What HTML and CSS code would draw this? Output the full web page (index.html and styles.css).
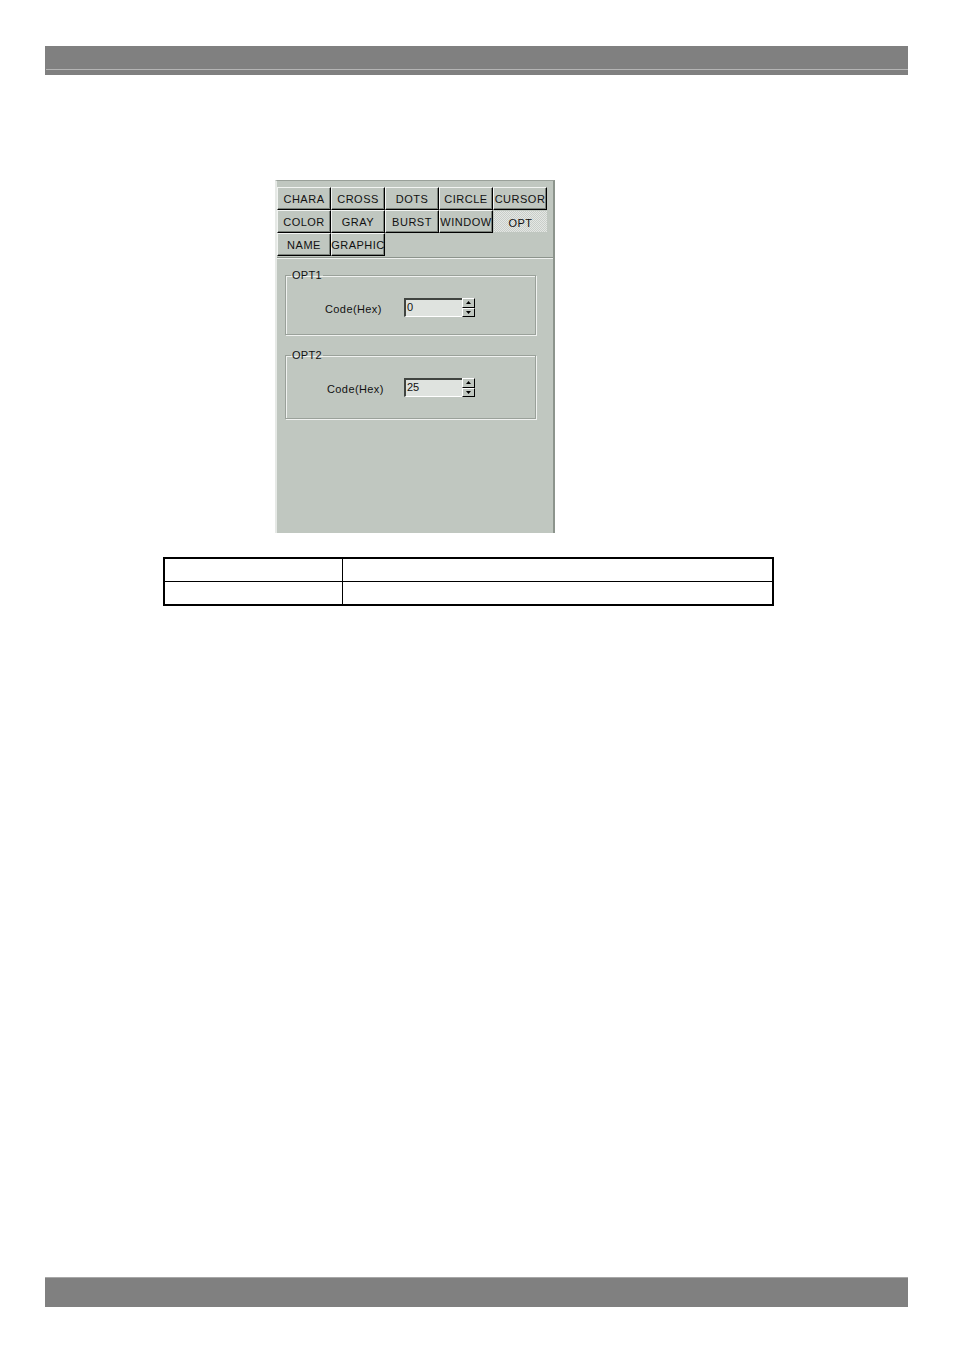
FILE: index.html
```html
<!DOCTYPE html>
<html>
<head>
<meta charset="utf-8">
<link rel="stylesheet" href="styles.css">
</head>
<body>
<div class="topbar"><div class="topline"></div></div>

<div class="panel">
  <div class="tabs">
    <div class="tab">CHARA</div>
    <div class="tab">CROSS</div>
    <div class="tab">DOTS</div>
    <div class="tab">CIRCLE</div>
    <div class="tab">CURSOR</div>
    <div class="tab">COLOR</div>
    <div class="tab">GRAY</div>
    <div class="tab">BURST</div>
    <div class="tab">WINDOW</div>
    <div class="tab active">OPT</div>
    <div class="tab">NAME</div>
    <div class="tab">GRAPHIC</div>
  </div>
  <div class="sep"></div>

  <fieldset class="group g1">
    <legend>OPT1</legend>
    <div class="row">
      <span class="lbl">Code(Hex)</span>
      <div class="spin">
        <div class="field">0</div>
        <div class="btns">
          <div class="sb"><svg width="5" height="3" viewBox="0 0 5 3"><path d="M2.5 0L5 3H0z" fill="#000"/></svg></div>
          <div class="sb"><svg width="5" height="3" viewBox="0 0 5 3"><path d="M0 0H5L2.5 3z" fill="#000"/></svg></div>
        </div>
      </div>
    </div>
  </fieldset>

  <fieldset class="group g2">
    <legend>OPT2</legend>
    <div class="row">
      <span class="lbl">Code(Hex)</span>
      <div class="spin">
        <div class="field">25</div>
        <div class="btns">
          <div class="sb"><svg width="5" height="3" viewBox="0 0 5 3"><path d="M2.5 0L5 3H0z" fill="#000"/></svg></div>
          <div class="sb"><svg width="5" height="3" viewBox="0 0 5 3"><path d="M0 0H5L2.5 3z" fill="#000"/></svg></div>
        </div>
      </div>
    </div>
  </fieldset>
</div>

<table class="grid">
  <tr><td class="c1"></td><td></td></tr>
  <tr><td class="c1"></td><td></td></tr>
</table>

<div class="botbar"></div>
</body>
</html>
```
FILE: styles.css
```css
html, body {
  margin: 0;
  padding: 0;
  background: #fff;
}
body {
  width: 954px;
  height: 1350px;
  font-family: "Liberation Sans", Arial, sans-serif;
  overflow: hidden;
}
.topbar {
  margin: 46px 0 0 45px;
  width: 863px;
  height: 29px;
  background: #808080;
  padding-top: 23px;
  box-sizing: border-box;
}
.topline {
  margin-left: 1px;
  width: 862px;
  height: 1px;
  background: #b4b4b4;
}
.panel {
  margin: 105px 0 0 275px;
  width: 280px;
  height: 353px;
  box-sizing: border-box;
  background: #c0c7c0;
  border-left: 2px solid #e6e9e6;
  border-right: 2px solid #8c948c;
  border-top: 1px solid #9aa19a;
  padding-top: 6px;
}
.tabs {
  display: grid;
  grid-template-columns: repeat(5, 54px);
  grid-auto-rows: 23px;
}
.tab {
  box-sizing: border-box;
  border-top: 1px solid #f2f4f2;
  border-left: 1px solid #f2f4f2;
  border-right: 1px solid #000;
  border-bottom: 1px solid #000;
  box-shadow: inset -1px -1px 0 #7c837c;
  font-size: 11px;
  color: #111;
  display: flex;
  align-items: center;
  justify-content: center;
  letter-spacing: 0.5px;
  white-space: nowrap;
}
.tab.active {
  border: none;
  box-shadow: none;
  margin: 1px 0 1px 1px;
  background-image: repeating-conic-gradient(#c9cec9 0 25%, #e4e7e4 0 50%);
  background-size: 2px 2px;
  padding-top: 2px;
}
.sep {
  margin-top: 1px;
  height: 1px;
  background: #8c948c;
  border-bottom: 1px solid #eef0ee;
}
.group {
  margin: 0 0 0 8px;
  padding: 0;
  width: 251px;
  box-sizing: border-box;
  border: 1px solid #9aa19a;
  box-shadow: 1px 1px 0 #f0f2f0, inset 1px 1px 0 #f0f2f0;
  min-width: 0;
}
.group legend {
  font-size: 11px;
  color: #111;
  padding: 0 1px;
  margin-left: 5px;
  line-height: 13px;
  letter-spacing: 0.3px;
}
.g1 {
  margin-top: 10px;
  height: 66px;
}
.g2 {
  margin-top: 14px;
  height: 70px;
}
.row {
  display: flex;
  align-items: center;
  margin-top: 16px;
}
.g2 .row {
  margin-top: 16px;
}
.lbl {
  font-size: 11px;
  color: #111;
  margin-left: 39px;
  width: 79px;
  letter-spacing: 0.4px;
  position: relative;
  top: 1px;
}
.g2 .lbl {
  margin-left: 41px;
  width: 77px;
}
.spin {
  display: flex;
  height: 19px;
}
.field {
  width: 58px;
  box-sizing: border-box;
  border-top: 2px solid #404440;
  border-left: 2px solid #404440;
  border-bottom: 1px solid #fff;
  border-right: 0;
  background: #dfe3df;
  font-size: 11px;
  line-height: 14px;
  padding-left: 1px;
  color: #111;
}
.btns {
  display: flex;
  flex-direction: column;
  width: 13px;
  height: 19px;
}
.sb {
  flex: 1;
  box-sizing: border-box;
  border-top: 1px solid #fff;
  border-left: 1px solid #fff;
  border-right: 1px solid #000;
  border-bottom: 1px solid #000;
  background: #c0c7c0;
  display: flex;
  align-items: center;
  justify-content: center;
}
.grid {
  margin: 24px 0 0 163px;
  width: 611px;
  height: 46px;
  border-collapse: collapse;
  border: 2px solid #000;
}
.grid td {
  border: 1px solid #000;
  padding: 0;
  height: 22px;
}
.grid td.c1 {
  width: 177px;
}
.botbar {
  margin: 671px 0 0 45px;
  width: 863px;
  height: 30px;
  background: #808080;
  border-top: 1px solid #a8a8a8;
  box-sizing: border-box;
}
```
